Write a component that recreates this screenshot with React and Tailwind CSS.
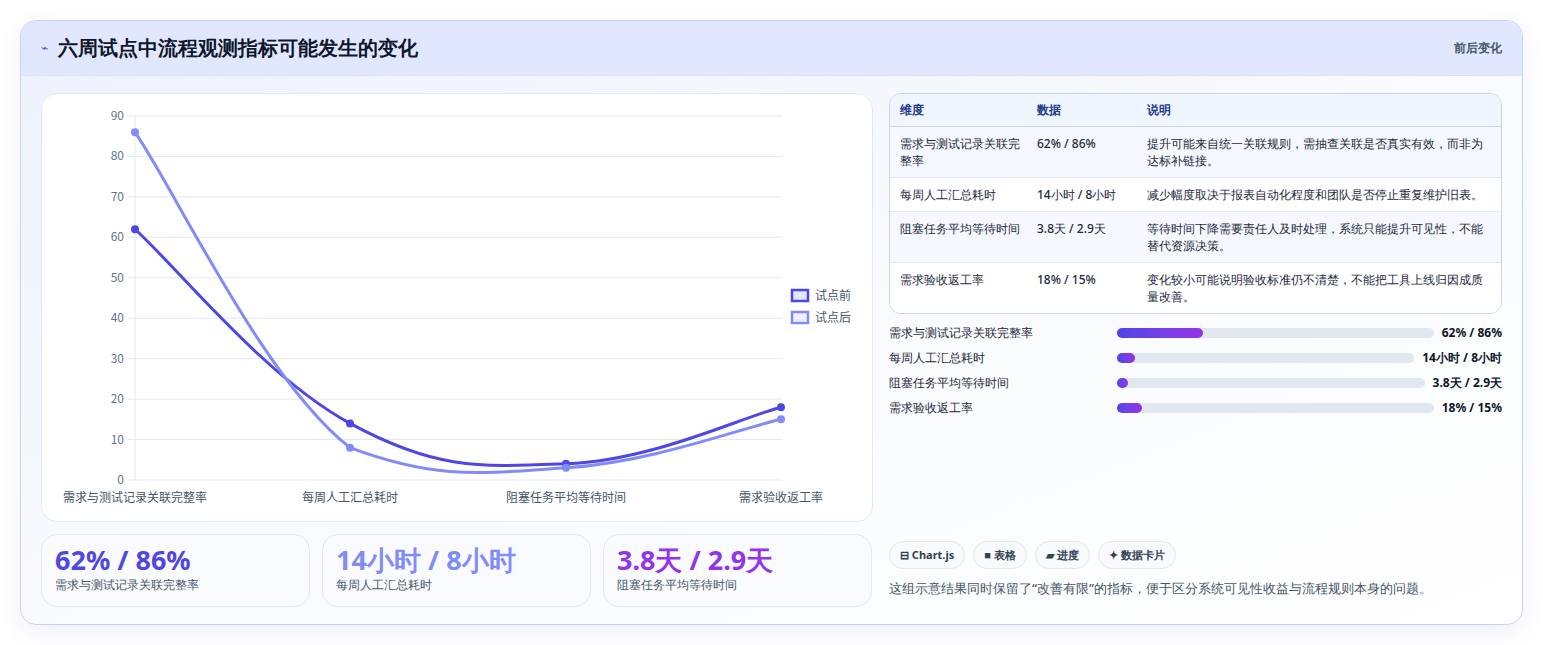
import React from "react";

const cats = ["需求与测试记录关联完整率", "每周人工汇总耗时", "阻塞任务平均等待时间", "需求验收返工率"];
const before = [62, 14, 4, 18];
const after = [86, 8, 3, 15];
const xs = [93, 308, 524, 739];
const yOf = (v) => 386 - (v * 364) / 90;

function spline(vals) {
  const p = vals.map((v, i) => [xs[i], yOf(v)]);
  const t = 0.4;
  const cl = (y) => Math.min(y, 386);
  let d = `M${p[0][0]},${p[0][1]}`;
  for (let i = 0; i < p.length - 1; i++) {
    const p0 = p[i - 1] || p[i];
    const p1 = p[i];
    const p2 = p[i + 1];
    const p3 = p[i + 2] || p2;
    const c1 = [p1[0] + ((p2[0] - p0[0]) * t) / 2, cl(p1[1] + ((p2[1] - p0[1]) * t) / 2)];
    const c2 = [p2[0] - ((p3[0] - p1[0]) * t) / 2, cl(p2[1] - ((p3[1] - p1[1]) * t) / 2)];
    d += ` C${c1[0]},${c1[1]} ${c2[0]},${c2[1]} ${p2[0]},${p2[1]}`;
  }
  return d;
}

function Chart() {
  const ticks = [0, 10, 20, 30, 40, 50, 60, 70, 80, 90];
  return (
    <svg width="832" height="428" className="block" style={{ fontFamily: "'Noto Sans CJK SC', sans-serif" }}>
      {ticks.map((t) => (
        <g key={t}>
          <line x1="86" x2="740" y1={yOf(t)} y2={yOf(t)} stroke="#e2e8f0" strokeWidth="1" />
          <text x="82" y={yOf(t) + 4} textAnchor="end" fontSize="12" fill="#64748b">{t}</text>
        </g>
      ))}
      <line x1="93" x2="93" y1="22" y2="386" stroke="#e2e8f0" />
      {cats.map((c, i) => (
        <text key={c} x={xs[i]} y="408" textAnchor="middle" fontSize="12" fill="#475569">{c}</text>
      ))}
      <path d={spline(before)} fill="none" stroke="#4f46e5" strokeWidth="3" />
      <path d={spline(after)} fill="none" stroke="#818cf8" strokeWidth="3" />
      {before.map((v, i) => <circle key={"b" + i} cx={xs[i]} cy={yOf(v)} r="4" fill="#4f46e5" />)}
      {after.map((v, i) => <circle key={"a" + i} cx={xs[i]} cy={yOf(v)} r="4" fill="#818cf8" />)}
      <rect x="750" y="196" width="16" height="11" fill="#e0e7ff" stroke="#4f46e5" strokeWidth="2.5" />
      <text x="773" y="206" fontSize="12" fill="#475569">试点前</text>
      <rect x="750" y="218" width="16" height="11" fill="#eef2ff" stroke="#818cf8" strokeWidth="2.5" />
      <text x="773" y="228" fontSize="12" fill="#475569">试点后</text>
    </svg>
  );
}

const rows = [
  ["需求与测试记录关联完整率", "62% / 86%", "提升可能来自统一关联规则，需抽查关联是否真实有效，而非为达标补链接。"],
  ["每周人工汇总耗时", "14小时 / 8小时", "减少幅度取决于报表自动化程度和团队是否停止重复维护旧表。"],
  ["阻塞任务平均等待时间", "3.8天 / 2.9天", "等待时间下降需要责任人及时处理，系统只能提升可见性，不能替代资源决策。"],
  ["需求验收返工率", "18% / 15%", "变化较小可能说明验收标准仍不清楚，不能把工具上线归因成质量改善。"],
];

const bars = [
  ["需求与测试记录关联完整率", "62% / 86%", 27],
  ["每周人工汇总耗时", "14小时 / 8小时", 6],
  ["阻塞任务平均等待时间", "3.8天 / 2.9天", 3.5],
  ["需求验收返工率", "18% / 15%", 8],
];

const stats = [
  ["62% / 86%", "需求与测试记录关联完整率", "text-[#4f46e5]"],
  ["14小时 / 8小时", "每周人工汇总耗时", "text-[#818cf8]"],
  ["3.8天 / 2.9天", "阻塞任务平均等待时间", "text-[#9333ea]"],
];

export default function App() {
  return (
    <div className="w-[1543px] h-[645px] bg-white pt-5 pl-5 font-['Noto_Sans_CJK_SC',sans-serif]">
      <div className="w-[1503px] h-[605px] rounded-2xl border border-[#c7d2fe] overflow-hidden bg-gradient-to-br from-[#eef2ff] via-[#f8fafc] to-white shadow-[0_8px_24px_rgba(79,70,229,0.08)]">
        <div className="h-[55px] bg-[#e0e7ff] border-b border-[#dbe3fb] flex items-center justify-between px-5">
          <div className="flex items-center gap-2.5">
            <span className="text-[#4f46e5] text-xs">⌁</span>
            <h1 className="text-[20px] font-bold text-[#0f172a]">六周试点中流程观测指标可能发生的变化</h1>
          </div>
          <span className="text-xs font-bold text-[#475569]">前后变化</span>
        </div>
        <div className="flex gap-4 px-5 pt-[17px]">
          <div className="w-[832px] flex flex-col gap-3">
            <div className="h-[429px] bg-white rounded-2xl border border-[#e0e7ff]">
              <Chart />
            </div>
            <div className="flex gap-3">
              {stats.map(([v, l, c]) => (
                <div key={l} className="w-[269px] h-[73px] rounded-2xl border border-[#dbeafe] bg-[#fafbff] px-[13px] pt-2">
                  <div className={`text-[27px] leading-[34px] font-bold ${c}`}>{v}</div>
                  <div className="text-xs text-[#475569]">{l}</div>
                </div>
              ))}
            </div>
          </div>
          <div className="w-[615px] flex flex-col">
            <div className="rounded-xl border border-[#cbd5e1] overflow-hidden bg-white text-xs">
              <div className="flex h-[33px] items-center bg-[#eff6ff] border-b border-[#cbd5e1] font-bold text-[#1e3a8a]">
                <div className="w-[147px] pl-2.5">维度</div>
                <div className="w-[110px]">数据</div>
                <div className="flex-1">说明</div>
              </div>
              {rows.map(([a, b, c], i) => (
                <div key={a} className={`flex py-[8px] leading-[17px] font-medium text-[#1e293b] ${i % 2 === 0 ? "bg-[#f5f8fe]" : "bg-white"} ${i < 3 ? "border-b border-[#e2e8f0]" : ""}`}>
                  <div className="w-[147px] pl-2.5 pr-4">{a}</div>
                  <div className="w-[110px]">{b}</div>
                  <div className="flex-1 pr-2.5">{c}</div>
                </div>
              ))}
            </div>
            <div className="flex flex-col gap-[7px] mt-[10px]">
              {bars.map(([l, v, w]) => (
                <div key={l} className="flex items-center h-[18px] text-xs font-medium text-[#1e293b]">
                  <div className="w-[220px] shrink-0">{l}</div>
                  <div className="flex-1 h-2.5 rounded-full bg-[#e2e8f0] mx-2">
                    <div className="h-2.5 rounded-full bg-gradient-to-r from-[#4f46e5] to-[#9333ea]" style={{ width: `${w}%` }} />
                  </div>
                  <div className="font-bold text-[#0f172a]">{v}</div>
                </div>
              ))}
            </div>
            <div className="flex gap-2 mt-[124px]">
              {["⊟ Chart.js", "■ 表格", "▰ 进度", "✦ 数据卡片"].map((c) => (
                <span key={c} className="h-[28px] px-2.5 flex items-center rounded-full border border-[#e2e8f0] bg-[#f8fafc] text-[11px] font-bold text-[#334155]">{c}</span>
              ))}
            </div>
            <p className="mt-[10px] text-[13px] font-medium text-[#475569]">这组示意结果同时保留了“改善有限”的指标，便于区分系统可见性收益与流程规则本身的问题。</p>
          </div>
        </div>
      </div>
    </div>
  );
}
